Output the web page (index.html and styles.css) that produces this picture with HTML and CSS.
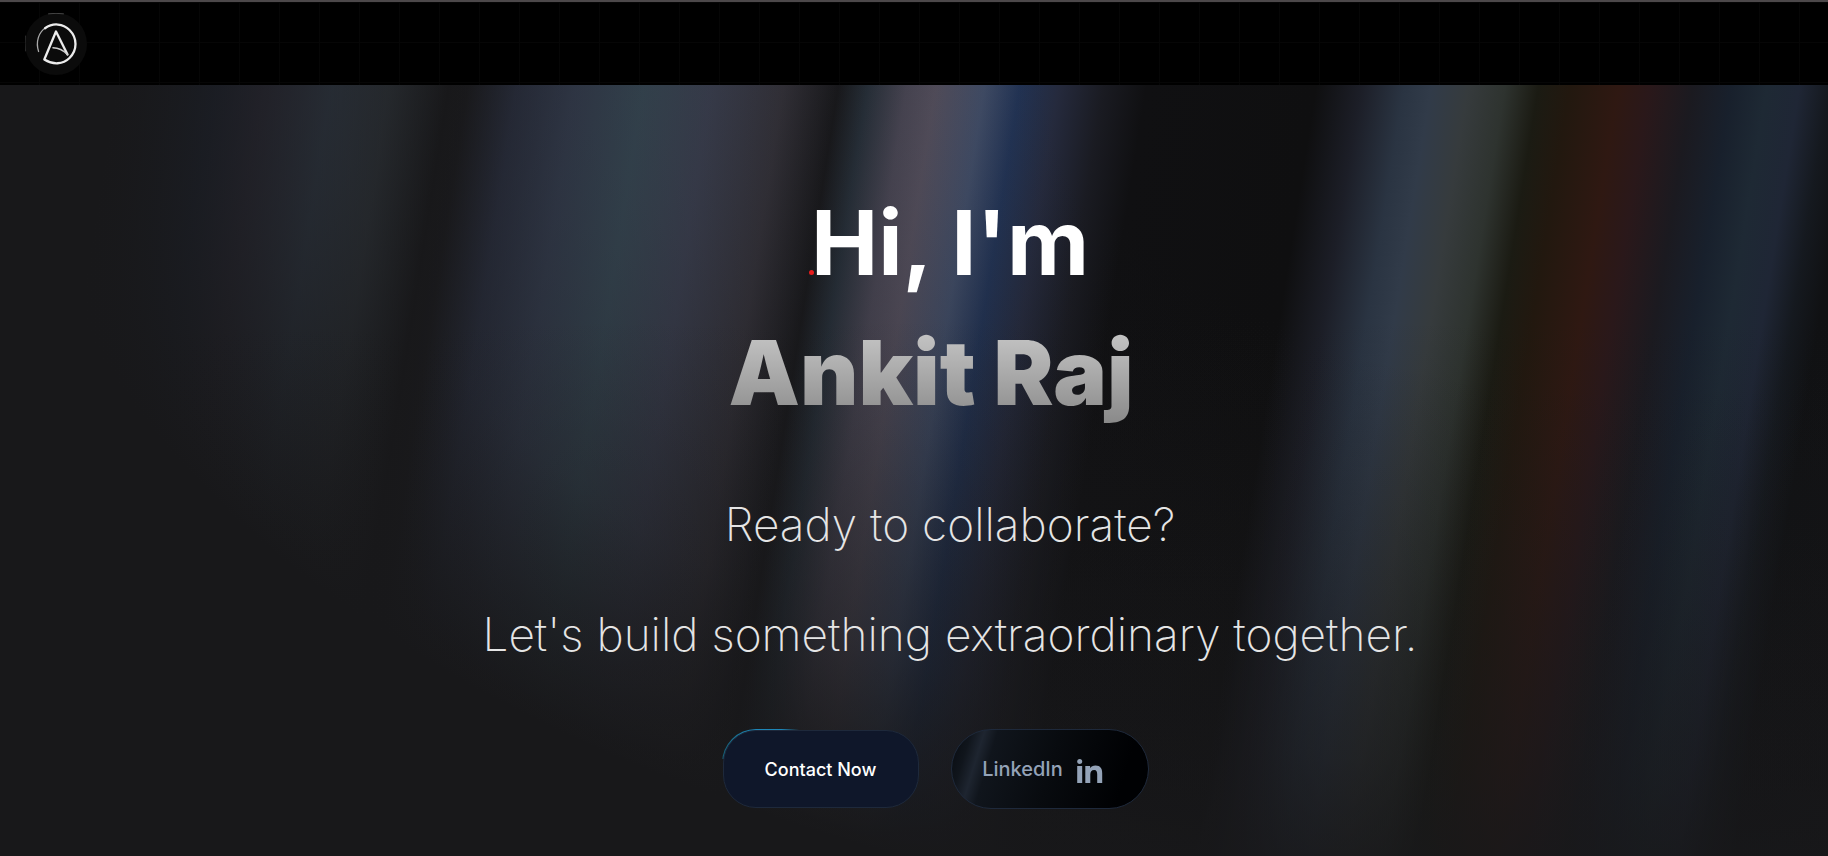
FILE: index.html
```html
<!DOCTYPE html>
<html lang="en">
<head>
<meta charset="utf-8">
<meta name="viewport" content="width=device-width, initial-scale=1">
<title>Ankit Raj</title>
<link rel="stylesheet" href="styles.css">
</head>
<body>
<header class="topbar">
  <a class="logo" href="#" aria-label="Home">
    <svg viewBox="0 0 62 62" width="62" height="62" fill="none" stroke="#ececec" stroke-linecap="round" stroke-linejoin="round">
      <circle cx="31" cy="31" r="31" fill="#0b0b0b" stroke="none"/>
      <path d="M23.500 .8q7.500-1 15 0" stroke="#555" stroke-width=".8"/>
      <path d="M.5 23q-.8 8 0 15" stroke="#333" stroke-width=".8"/>
      <path d="M13.600 38.500C10.500 29 13.500 19 21 14.500" stroke="#aaa" stroke-width="1.300"/>
      <path d="M20 15.200C28 9.500 38 10.500 44.500 17C52.500 25 52.500 37 44.500 45C38 51.500 28 52 19.300 46.500L31 18.500L42.500 41.500" stroke-width="2.300"/>
      <path d="M42.500 41.500C38 37 34 35 28 34.800" stroke="#ccc" stroke-width="1.500"/>
    </svg>
  </a>
</header>
<main class="hero">
  <h1 class="title">
    <span class="greeting">Hi, I'm</span>
    <span class="name">Ankit Raj</span>
  </h1>
  <p class="lead">Ready to collaborate?</p>
  <p class="lead">Let's build something extraordinary together.</p>
  <div class="actions">
    <button class="btn contact" type="button"><span class="contact-face">Contact Now</span></button>
    <a class="btn linkedin" href="#">LinkedIn
      <svg viewBox="0 0 26 24" width="26" height="24" fill="currentColor" aria-hidden="true">
        <circle cx="2.700" cy="2.500" r="2.500"/>
        <path d="M.2 7h5v17h-5zM8.300 7h4.800v2.300C14.100 7.600 16 6.600 18.500 6.600c5 0 6.700 3.200 6.700 7.700V24h-5v-8.500c0-2.600-.6-4.500-3-4.500-2.700 0-3.900 1.900-3.900 4.600V24h-5z"/>
      </svg>
    </a>
  </div>
</main>
</body>
</html>
```
FILE: styles.css
```css
* { box-sizing: border-box; }

body {
  margin: 0;
  min-height: 100vh;
  display: flex;
  flex-direction: column;
  background: #18181a;
  color: #fff;
  font-family: Inter, "Liberation Sans", sans-serif;
}

.topbar {
  display: flex;
  height: 85px;
  padding: 11px 25px 0;
  border-top: 2px solid #4c484a;
  background:
    linear-gradient(90deg, transparent 39px, #060606 39px) 0 0 / 40px 40px,
    linear-gradient(transparent 39px, #060606 39px) 0 1px / 40px 40px,
    #000;
}

.logo, .logo svg { display: block; }

.hero {
  flex: 1;
  padding: 93px 0 47px 72px;
  text-align: center;
  background:
    linear-gradient(transparent 30%, #18181a80 100%),
    radial-gradient(ellipse 88% 112% at 89% 0,
      transparent 35%, #18181a40 60%, #18181a80 80%, #18181a 100%),
    linear-gradient(99deg,
      #18181a 0%, #18181a 6%, #202838 11%, #30303f 13.500%, #35404e 17%,
      #30363c 20%, #18181a 23%, #1a1a1d 24%, #2c3244 26.500%, #384256 29.500%,
      #3b4e5c 33%, #3e4355 36.500%, #35333b 40.200%, #18181b 43%,
      #27303a 44.500%, #4a4755 46.500%, #544f5d 48%, #404c66 50.500%,
      #223354 52.300%, #252a3d 54.300%, #1a1b22 56.600%, #101012 58.800%,
      #0f0f10 67.500%, #1c1e27 69.800%, #2a3442 72%, #313b49 73.400%,
      #363b3d 75.300%, #2e332f 77.200%, #1b1b13 78.900%, #22180f 80.500%,
      #2f1812 83%, #2a181a 84.600%, #1b1a20 86.800%, #18202c 88.800%,
      #1e2934 90.600%, #1f2635 92.300%, #15191f 93.800%, #101113 95.200%, #121214 100%);
}

.title { margin: 0 0 31px; font-size: 90px; line-height: 130px; }

.greeting { display: table; position: relative; margin: 0 auto; font-weight: 700; }

.greeting::before {
  content: "";
  position: absolute;
  left: -2px;
  bottom: 33px;
  width: 5px;
  height: 5px;
  border-radius: 50%;
  background: #e81c1c;
}

.name {
  display: block;
  padding-right: 38px;
  font-weight: 900;
  color: transparent;
  background: linear-gradient(#d4d4d4, #808080);
  background-clip: text;
  -webkit-background-clip: text;
}

.lead { margin: 0; font-size: 46px; line-height: 110px; font-weight: 200; color: #e5e5e5; }

.actions {
  display: flex;
  justify-content: center;
  align-items: center;
  gap: 31px;
  margin-top: 40px;
  padding-right: 30px;
}

.btn {
  width: 198px;
  height: 80px;
  border-radius: 40px;
  font-family: inherit;
  font-weight: 500;
  text-decoration: none;
}

.contact {
  padding: 1px;
  border: 0;
  color: #fff;
  font-size: 18px;
  border-radius: 34px;
  background: linear-gradient(90deg, #155e75 0, #1d86b8 16%, #1d86b8 30%, transparent 39%) 0 0 / 100% 30px no-repeat;
}

.contact-face {
  display: flex;
  align-items: center;
  justify-content: center;
  height: 100%;
  border: 1px solid #1e293b;
  border-radius: 33px;
  background: #0f172a;
}

.linkedin {
  display: flex;
  align-items: center;
  justify-content: center;
  gap: 14px;
  padding-right: 14px;
  border: 1px solid #1e293b;
  color: #94a3b8;
  font-size: 20px;
  background: linear-gradient(107deg, #0b0f15 4%, #10151c 9%, #1e2530 15%, #10151c 21%, #080b0f 50%, #000103 85%);
}

.linkedin svg { margin-top: 3px; }
```
